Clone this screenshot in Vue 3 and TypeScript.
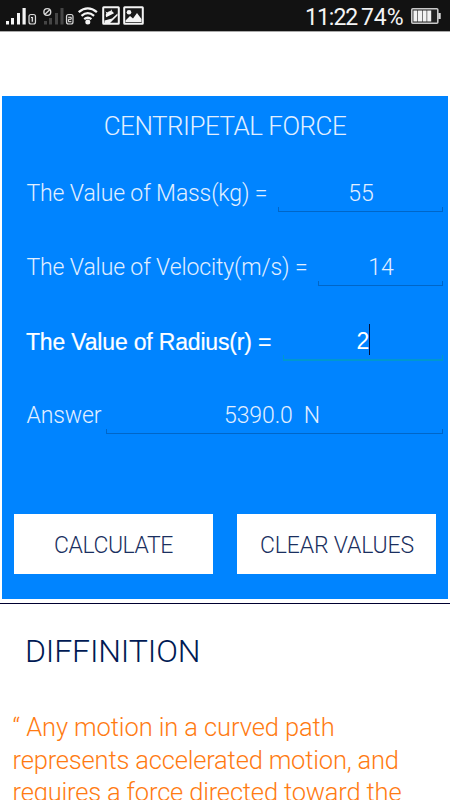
<script setup lang="ts">
import { ref } from 'vue'

interface Field {
  key: string
  label: string
  value: string
  focused?: boolean
}

const fields = ref<Field[]>([
  { key: 'mass', label: 'The Value of Mass(kg) =', value: '55' },
  { key: 'velocity', label: 'The Value of Velocity(m/s) =', value: '14' },
  { key: 'radius', label: 'The Value of Radius(r) =', value: '2', focused: true },
  { key: 'answer', label: 'Answer', value: '5390.0\u00a0 N' },
])

function calculate() {
  const [m, v, r] = fields.value.map((f) => parseFloat(f.value))
  fields.value[3].value = `${((m * v * v) / r).toFixed(1)}\u00a0 N`
}

function clearValues() {
  fields.value.forEach((f) => (f.value = ''))
}
</script>

<template>
  <div class="screen">
    <header class="status">
      <svg class="status-icons" width="150" height="31" viewBox="0 0 150 31">
        <g fill="#f4f4f4">
          <rect x="6" y="21" width="3" height="3.5" />
          <rect x="11" y="18" width="3" height="6.5" />
          <rect x="17" y="13" width="3" height="11.5" />
          <rect x="22.5" y="8" width="3.2" height="16.5" />
        </g>
        <rect x="29" y="14.5" width="6.5" height="9.5" rx="2" fill="#222" stroke="#d8d8d8" stroke-width="1.2" />
        <path d="M31 17.5h1.3v4.3" fill="none" stroke="#eee" stroke-width="1.2" />
        <g fill="#454545">
          <rect x="44" y="21" width="3" height="3.5" />
          <rect x="49" y="18" width="3" height="6.5" />
          <rect x="55" y="13" width="3" height="11.5" />
          <rect x="60.5" y="8" width="3" height="16.5" />
        </g>
        <circle cx="47.3" cy="12" r="3.4" fill="none" stroke="#d8d8d8" stroke-width="1.4" />
        <path d="M45 14.3l4.7-4.6" stroke="#d8d8d8" stroke-width="1.4" />
        <rect x="66.5" y="14.5" width="6.5" height="9.5" rx="2" fill="#222" stroke="#d8d8d8" stroke-width="1.2" />
        <path d="M68.2 17.3h3v2h-2.8v2.4h3" fill="none" stroke="#eee" stroke-width="1" />
        <g fill="none" stroke="#f4f4f4" stroke-width="2.3">
          <path d="M78.7 12.2q9.1-7.6 18.2 0" />
          <path d="M81.5 15.8q6.3-5.3 12.6 0" />
          <path d="M84.2 19.2q3.6-3 7.2 0" />
        </g>
        <circle cx="87.8" cy="22" r="2.5" fill="#f4f4f4" />
        <rect x="103.2" y="7.2" width="15.6" height="16.6" rx=".5" fill="#181818" stroke="#f4f4f4" stroke-width="2" />
        <path d="M104.5 20.5L112 18.5 117.5 13.5v2l-7.5 7.5h-5.5z" fill="#f4f4f4" />
        <path d="M106.2 17.3a4.4 4.4 0 0 1 7.8-4z" fill="#f4f4f4" />
        <path d="M105.8 12l1.8 1.6M111.4 9.8l-.4 2.2" stroke="#f4f4f4" />
        <rect x="124.2" y="7.2" width="18.6" height="16.6" rx=".5" fill="#181818" stroke="#f4f4f4" stroke-width="2" />
        <circle cx="129" cy="12.2" r="2.3" fill="#f4f4f4" />
        <path d="M125.5 22v-1.5l4.5-4.5 3 2.5 4-5.5 4.5 6v3z" fill="#f4f4f4" />
      </svg>
      <div class="status-right">
        <span class="clock">11:22</span>
        <span class="percent">74%</span>
        <svg width="30" height="16" viewBox="0 0 30 16">
          <rect x=".8" y=".8" width="26" height="14.4" rx="1" fill="#222" stroke="#c8c8c8" stroke-width="1.6" />
          <path d="M28.5 5v6" stroke="#d8d8d8" stroke-width="2.4" />
          <path d="M4.4 2.5v11M9 2.5v11M13.6 2.5v11M18.2 2.5v11" stroke="#f2f2f2" stroke-width="4" />
        </svg>
      </div>
    </header>

    <main class="card">
      <h1 class="title">CENTRIPETAL FORCE</h1>
      <div v-for="f in fields" :key="f.key" class="row" :class="[f.key, { focused: f.focused }]">
        <span class="label">{{ f.label }}</span>
        <div class="field">
          <span class="value">{{ f.value }}</span><i v-if="f.focused" class="caret"></i>
        </div>
      </div>
      <div class="actions">
        <button class="btn calc" @click="calculate">CALCULATE</button>
        <button class="btn clear" @click="clearValues">CLEAR VALUES</button>
      </div>
    </main>

    <section class="info">
      <h2 class="heading">DIFFINITION</h2>
      <p class="quote">
        <span class="opening">“ Any motion in a curved path</span>
        <span>represents accelerated motion, and</span>
        <span>requires a force directed toward the</span>
      </p>
    </section>
  </div>
</template>

<style>
body {
  margin: 0;
  background: #fff;
}
</style>

<style scoped>
.screen {
  width: 450px;
  height: 800px;
  overflow: hidden;
  background: #fff;
  font-family: Roboto, "Liberation Sans", sans-serif;
  font-weight: 300;
}
.status {
  box-sizing: border-box;
  height: 32px;
  display: flex;
  justify-content: space-between;
  background: #121212;
  border-bottom: 1px solid #aaa;
}
.status-right {
  display: flex;
  align-items: center;
  height: 32px;
  padding-right: 9px;
  color: #f4f4f4;
  font-size: 23px;
  font-weight: 400;
}
.clock {
  width: 56px;
  letter-spacing: -1px;
  margin-top: 2px;
}
.percent {
  width: 50px;
  letter-spacing: -0.1px;
  margin-top: 2px;
}
.card {
  box-sizing: border-box;
  height: 503px;
  margin: 64px 2px 0;
  background: #0084ff;
  color: #e2efff;
}
.title {
  margin: 0;
  height: 60px;
  line-height: 61px;
  text-align: center;
  font-size: 26px;
  letter-spacing: -0.5px;
  font-weight: 300;
}
.row {
  display: flex;
  height: 74px;
  padding: 0 5px 0 24px;
}
.label {
  box-sizing: border-box;
  flex: none;
  height: 74px;
  padding-left: 0.5px;
  line-height: 76px;
  white-space: pre;
  font-size: 23px;
  letter-spacing: -0.13px;
}
.field {
  position: relative;
  box-sizing: border-box;
  flex: 1;
  display: flex;
  justify-content: center;
  height: 56px;
  --line: #0066c8;
}
.field::after {
  content: "";
  position: absolute;
  box-sizing: border-box;
  inset: auto 0 0;
  height: 5px;
  border: 1px solid var(--line);
  border-top: 0;
}
.value {
  padding-left: 1px;
  line-height: 76px;
  font-size: 23px;
  white-space: pre;
}
.answer .value {
  padding: 0 5px 0 0;
  letter-spacing: -0.1px;
}
.mass .label { width: 252px; }
.velocity .label { width: 292px; }
.radius .label { width: 257px; }
.answer .label { width: 80px; }
.focused {
  font-family: "Liberation Sans", sans-serif;
  font-weight: 400;
  color: #fff;
}
.focused .label {
  padding-left: 0;
  letter-spacing: -0.18px;
  -webkit-text-stroke: 0.2px #fff;
}
.focused .value {
  padding-left: 1px;
  line-height: 75px;
}
.focused .field {
  --line: #0098cf;
}
.focused .field::after {
  bottom: -1px;
  height: 6px;
  border-bottom-width: 2px;
}
.caret {
  width: 1px;
  height: 31px;
  margin-top: 20px;
  background: #00103c;
}
.actions {
  display: grid;
  grid-template-columns: 199px 199px;
  gap: 24px;
  padding: 62px 12px 0;
}
.btn {
  height: 60px;
  padding: 2px 0 0;
  border: 0;
  background: #fff;
  color: #1a2f60;
  font: 300 23px Roboto, "Liberation Sans", sans-serif;
}
.calc {
  letter-spacing: -0.45px;
}
.clear {
  padding-left: 1px;
  letter-spacing: -0.15px;
}
.info {
  margin-top: 4px;
  border-top: 1px solid #000030;
}
.heading {
  margin: 0;
  padding: 27px 25px 0;
  font-size: 32px;
  line-height: 40px;
  letter-spacing: -0.15px;
  font-weight: 300;
  color: #001a54;
}
.quote {
  display: flex;
  flex-direction: column;
  margin: 0;
  padding: 40px 0 0 12.5px;
  font-size: 25.5px;
  line-height: 32.6px;
  letter-spacing: -0.18px;
  white-space: nowrap;
  color: #ff7b12;
}
.opening {
  letter-spacing: -0.1px;
}
</style>
